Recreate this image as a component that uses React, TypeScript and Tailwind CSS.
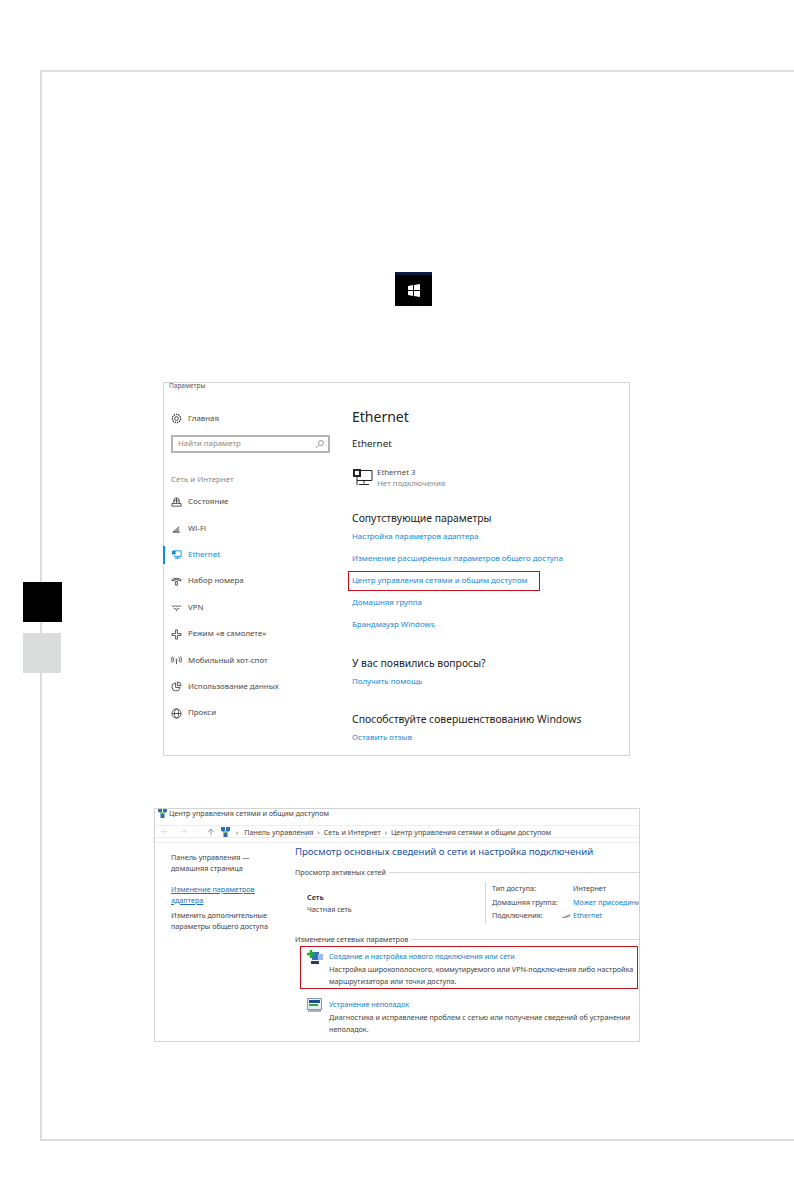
import React from "react";
import { ArrowLeft, ArrowRight, ArrowUp, ChevronDown } from "lucide-react";

const stroke = {
  fill: "none",
  stroke: "currentColor",
  strokeWidth: 1,
};

const icons: Record<string, React.ReactNode> = {
  status: (
    <>
      <path d="M3 7V4a3 3 0 0 1 6 0v3M6 1v6M3 4h6" {...stroke} />
      <path d="M1 7h10v3H1z" {...stroke} />
    </>
  ),
  wifi: <path d="M2 10l7-6M4 10l5-4M6 10l3-2M2 10h8" {...stroke} />,
  ethernet: (
    <>
      <path d="M3 2h8v6H3M7 8v2M4 10h6" {...stroke} />
      <path d="M1 2h4v4H1z" fill="currentColor" />
    </>
  ),
  dial: <path d="M1 4c2-2 8-2 10 0v1H8V4H4v1H1zM5 6h2v4H5z" {...stroke} />,
  vpn: <path d="M1 4l2 1 2-1 2 1 2-1 2 1M3 7l3 1 3-1M6 9v1" {...stroke} />,
  plane: <path d="M1 5h4V1h2v4h4v2H7v4H5V7H1z" {...stroke} />,
  hotspot: (
    <>
      <circle cx="6" cy="5" r="1" fill="currentColor" />
      <path d="M6 6v4M3.500 2.500c-1.300 1.500-1.300 3.500 0 5M8.500 2.500c1.300 1.500 1.300 3.500 0 5M1.500 1.500c-1 2-1 5 0 7M10.500 1.500c1 2 1 5 0 7" {...stroke} />
    </>
  ),
  data: (
    <>
      <path d="M5 2a4.500 4.500 0 1 0 5 5H5z" {...stroke} />
      <path d="M7 1a4 4 0 0 1 4 4H7z" {...stroke} />
    </>
  ),
  proxy: (
    <>
      <circle cx="6" cy="6" r="5" {...stroke} />
      <ellipse cx="6" cy="6" rx="2.200" ry="5" {...stroke} />
      <path d="M1 6h10" {...stroke} />
    </>
  ),
};

const menu = [
  { key: "status", label: "Состояние" },
  { key: "wifi", label: "Wi-Fi" },
  { key: "ethernet", label: "Ethernet", active: true },
  { key: "dial", label: "Набор номера" },
  { key: "vpn", label: "VPN" },
  { key: "plane", label: "Режим «в самолете»" },
  { key: "hotspot", label: "Мобильный хот-спот" },
  { key: "data", label: "Использование данных" },
  { key: "proxy", label: "Прокси" },
];

const NetIcon = () => (
  <svg width="9" height="10" viewBox="0 0 9 10" className="shrink-0">
    <rect x="0" y="0" width="4" height="4" fill="#2f6fb5" />
    <rect x="5" y="0" width="4" height="4" fill="#2f6fb5" />
    <rect x="2.500" y="6" width="4" height="4" fill="#2f6fb5" />
    <path d="M2 4v1h5V4M4.500 5v1" stroke="#2a9a3a" fill="none" />
  </svg>
);

const SettingsCard = () => (
  <section className="ml-[121px] mt-[76px] w-[467px] h-[374px] border border-[#d4d4d4] bg-white relative text-[7.900px] text-[#4a4a4a]">
    <div className="h-[6px] pl-[5px] text-[6.500px] leading-[6px] text-[#555]">Параметры</div>
    <div className="flex">
      <div className="w-[187px] shrink-0">
        <div className="h-[41px] pl-[7px] pt-[18px] flex items-center gap-[6px]">
          <svg width="11" height="11" viewBox="0 0 12 12" className="text-[#333]">
            <circle cx="6" cy="6" r="2" {...stroke} />
            <circle cx="6" cy="6" r="4.500" fill="none" stroke="currentColor" strokeWidth="1.500" strokeDasharray="1.500 1" />
          </svg>
          <span>Главная</span>
        </div>
        <div className="ml-[7px] mt-[5px] w-[159px] h-[18px] border-2 border-[#b4b4b4] flex items-center justify-between pl-[5px] pr-[3px] text-[#8a8a8a]">
          <span>Найти параметр</span>
          <svg width="10" height="10" viewBox="0 0 10 10" className="text-[#999]">
            <circle cx="6" cy="4" r="2.500" {...stroke} />
            <path d="M4 6L1 9" {...stroke} />
          </svg>
        </div>
        <div className="ml-[7px] mt-[20px] h-[12px] leading-[12px] text-[#888]">Сеть и Интернет</div>
        <div className="mt-[4px]">
          {menu.map((item) => (
            <div
              key={item.key}
              className={
                item.active
                  ? "relative h-[26.400px] pl-[7px] flex items-center gap-[6px] text-[#0d8be0]"
                  : "relative h-[26.400px] pl-[7px] flex items-center gap-[6px]"
              }
            >
              {item.active && <div className="absolute -left-px top-[4px] w-[2px] h-[18px] bg-[#0d8be0]" />}
              <svg width="11" height="11" viewBox="0 0 12 12" className="shrink-0">
                {icons[item.key]}
              </svg>
              <span>{item.label}</span>
            </div>
          ))}
        </div>
      </div>
      <div className="pt-[17px] pl-px">
        <div className="h-[22px] leading-[22px] text-[14px] text-[#222]">Ethernet</div>
        <div className="mt-[9px] h-[14px] leading-[14px] text-[9.800px] text-[#222]">Ethernet</div>
        <div className="mt-[16px] flex items-center gap-[4px] pl-px">
          <svg width="20" height="18" viewBox="0 0 20 18" className="text-[#222]">
            <path d="M4 1.500h15v10H4M11 11.500v3M6 15.500h10M4 8v8" {...stroke} />
            <path d="M1 1h6v6H1z" {...stroke} strokeWidth="2" />
          </svg>
          <div className="leading-[11px]">
            <div>Ethernet 3</div>
            <div className="text-[#888]">Нет подключения</div>
          </div>
        </div>
        <div className="mt-[22px] h-[15px] leading-[15px] text-[10.400px] text-[#222]">Сопутствующие параметры</div>
        <div className="text-[#0d8be0]">
          <div className="mt-[4px] h-[12px] leading-[12px]">Настройка параметров адаптера</div>
          <div className="mt-[10px] h-[12px] leading-[12px]">Изменение расширенных параметров общего доступа</div>
          <div className="relative mt-[10px] h-[12px] leading-[12px]">
            Центр управления сетями и общим доступом
            <div className="absolute -left-[4px] -top-[3px] w-[192px] h-[20px] border border-[#c8101c]" />
          </div>
          <div className="mt-[10px] h-[12px] leading-[12px]">Домашняя группа</div>
          <div className="mt-[10px] h-[12px] leading-[12px]">Брандмауэр Windows</div>
        </div>
        <div className="mt-[26px] h-[15px] leading-[15px] text-[10.400px] text-[#222]">У вас появились вопросы?</div>
        <div className="mt-[4px] h-[12px] leading-[12px] text-[#0d8be0]">Получить помощь</div>
        <div className="mt-[25px] h-[15px] leading-[15px] text-[10.400px] text-[#222]">Способствуйте совершенствованию Windows</div>
        <div className="mt-[4px] h-[12px] leading-[12px] text-[#0d8be0]">Оставить отзыв</div>
      </div>
    </div>
  </section>
);

const NetworkCard = () => (
  <section className="ml-[112px] mt-[52px] w-[486px] h-[234px] border border-[#d4d4d4] bg-white overflow-hidden text-[7.200px] text-[#444]">
    <div className="h-[8px] pl-[3px] flex items-center gap-[2px] leading-[8px]">
      <NetIcon />
      <span>Центр управления сетями и общим доступом</span>
    </div>
    <div className="mt-[8px] h-[13px] border-y border-[#eeeeee] flex items-center pl-[5px] leading-[12px]">
      <div className="flex items-center w-[61px] text-[#cfcfcf]">
        <ArrowLeft size={9} strokeWidth={1.500} className="mr-[10px]" />
        <ArrowRight size={9} strokeWidth={1.500} className="mr-[7px]" />
        <ChevronDown size={6} strokeWidth={1.500} className="mr-[5px]" />
        <ArrowUp size={10} strokeWidth={1.500} className="text-[#666]" />
      </div>
      <NetIcon />
      <div className="ml-[6px] flex items-center gap-[4px] whitespace-nowrap">
        <span>›</span>
        <span className="ml-[2px]">Панель управления</span>
        <span>›</span>
        <span>Сеть и Интернет</span>
        <span>›</span>
        <span>Центр управления сетями и общим доступом</span>
      </div>
    </div>
    <div className="mt-[4px] h-px bg-[#eeeeee]" />
    <div className="flex">
      <div className="w-[140px] shrink-0 pl-[16px] pt-[9px] leading-[10.500px]">
        <div>Панель управления —</div>
        <div>домашняя страница</div>
        <div className="mt-[11px] text-[#1f6fb5] underline">Изменение параметров</div>
        <div className="text-[#1f6fb5] underline">адаптера</div>
        <div className="mt-[5px]">Изменить дополнительные</div>
        <div>параметры общего доступа</div>
      </div>
      <div className="flex-1 min-w-0">
        <div className="mt-px h-[16px] leading-[16px] text-[9.600px] text-[#1a4f9c] whitespace-nowrap">Просмотр основных сведений о сети и настройка подключений</div>
        <div className="mt-[7px] flex items-center gap-[3px] h-[10px] leading-[10px]">
          <span className="whitespace-nowrap">Просмотр активных сетей</span>
          <div className="flex-1 h-px bg-[#d8d8d8]" />
        </div>
        <div className="flex mt-[5px] h-[42px]">
          <div className="w-[190px] shrink-0 pl-[12px] pt-[9px] leading-[12px]">
            <div className="font-bold">Сеть</div>
            <div>Частная сеть</div>
          </div>
          <div className="flex-1 min-w-0 border-l border-[#d8d8d8] pl-[6px] leading-[13.500px] whitespace-nowrap">
            <div className="flex"><span className="w-[81px] shrink-0">Тип доступа:</span><span>Интернет</span></div>
            <div className="flex"><span className="w-[81px] shrink-0">Домашняя группа:</span><span className="text-[#0f7fc8]">Может присоединиться</span></div>
            <div className="flex items-center">
              <span className="w-[69px] shrink-0">Подключения:</span>
              <svg width="10" height="6" viewBox="0 0 10 6" className="mr-[2px] shrink-0">
                <path d="M0 5l7-3 3-1-2 3-4 1z" fill="#8a9ab0" />
              </svg>
              <span className="text-[#0f7fc8]">Ethernet</span>
            </div>
          </div>
        </div>
        <div className="mt-[10px] flex items-center gap-[3px] h-[10px] leading-[10px]">
          <span className="whitespace-nowrap">Изменение сетевых параметров</span>
          <div className="flex-1 h-px bg-[#d8d8d8]" />
        </div>
        <div className="mt-[2px] ml-[5px] h-[43px] w-[338px] border border-[#c8101c] flex pl-[6px] pt-[3px]">
          <svg width="16" height="15" viewBox="0 0 16 15" className="shrink-0 mr-[6px]">
            <rect x="5" y="2" width="7" height="8" fill="#2f6fc5" />
            <rect x="11" y="4" width="5" height="6" fill="#9bbde8" />
            <path d="M4 0v8M0 4h8" stroke="#2aa83a" strokeWidth="2.500" />
            <rect x="4" y="11" width="8" height="3" fill="#1f3f6f" />
          </svg>
          <div className="leading-[12px] whitespace-nowrap">
            <div className="text-[#0f7fc8]">Создание и настройка нового подключения или сети</div>
            <div className="mt-[1px]">Настройка широкополосного, коммутируемого или VPN-подключения либо настройка</div>
            <div>маршрутизатора или точки доступа.</div>
          </div>
        </div>
        <div className="mt-[6px] ml-[5px] flex pl-[7px] pt-[3px]">
          <svg width="15" height="14" viewBox="0 0 15 14" className="shrink-0 mr-[7px]">
            <rect x="0.500" y="0.500" width="14" height="11" fill="#e8edf2" stroke="#8a98a8" />
            <rect x="2" y="2" width="11" height="3" fill="#1f4f8f" />
            <path d="M2 7h9" stroke="#2aa83a" strokeWidth="2" />
            <rect x="1" y="12" width="13" height="2" fill="#aab4c0" />
          </svg>
          <div className="leading-[12px] whitespace-nowrap">
            <div className="text-[#0f7fc8]">Устранение неполадок</div>
            <div className="mt-[1px]">Диагностика и исправление проблем с сетью или получение сведений об устранении</div>
            <div>неполадок.</div>
          </div>
        </div>
      </div>
    </div>
  </section>
);

export default function App() {
  return (
    <div className="w-[794px] h-[1191px] bg-white pt-[70px] pl-[40px] overflow-hidden font-['Noto_Sans',sans-serif]">
      <div className="relative h-[1071px] border-l-2 border-y-2 border-[#dcdcdc]">
        <div className="absolute -left-[19px] top-[510px] w-[39px] h-[40px] bg-black" />
        <div className="absolute -left-[19px] top-[561px] w-[38px] h-[40px] bg-[#dbdcdc]" />
        <div className="pt-[200px] pl-[353px]">
          <div className="w-[37px] h-[34px] bg-black border-t-[3px] border-[#0a1a40] flex items-center justify-center">
            <svg width="12" height="13" viewBox="0 0 12 13">
              <path d="M0 2l5-1v5H0zM6 1l6-1v6H6zM0 7h5v5l-5-1zM6 7h6v6l-6-1z" fill="#fff" />
            </svg>
          </div>
        </div>
        <SettingsCard />
        <NetworkCard />
      </div>
    </div>
  );
}
